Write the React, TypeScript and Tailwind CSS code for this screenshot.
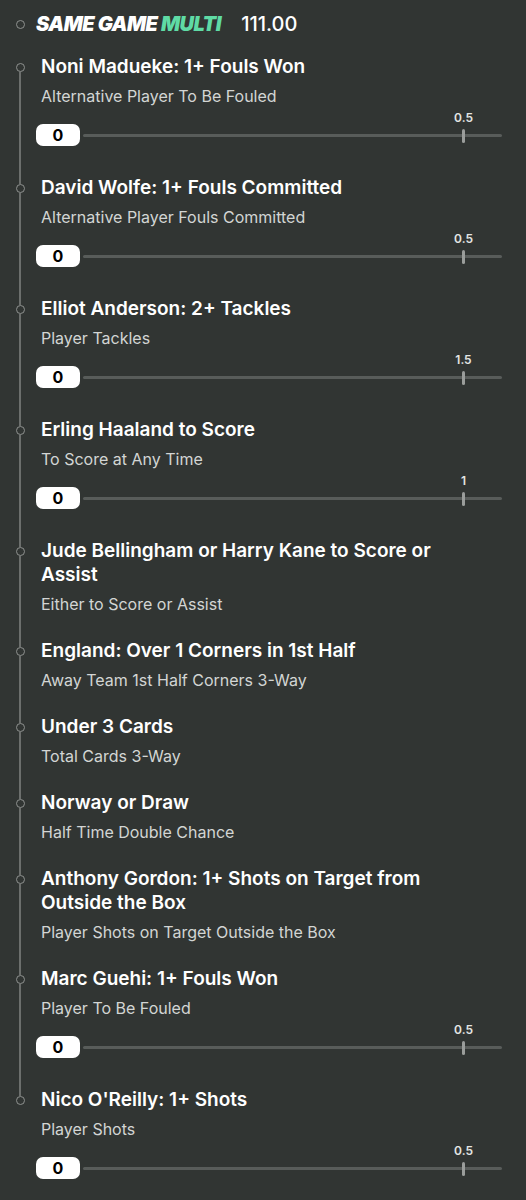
import React from 'react';

interface Leg {
  title: string;
  market: string;
  line?: string;
}

const legs: Leg[] = [
  { title: 'Noni Madueke: 1+ Fouls Won', market: 'Alternative Player To Be Fouled', line: '0.5' },
  { title: 'David Wolfe: 1+ Fouls Committed', market: 'Alternative Player Fouls Committed', line: '0.5' },
  { title: 'Elliot Anderson: 2+ Tackles', market: 'Player Tackles', line: '1.5' },
  { title: 'Erling Haaland to Score', market: 'To Score at Any Time', line: '1' },
  { title: 'Jude Bellingham or Harry Kane to Score or Assist', market: 'Either to Score or Assist' },
  { title: 'England: Over 1 Corners in 1st Half', market: 'Away Team 1st Half Corners 3-Way' },
  { title: 'Under 3 Cards', market: 'Total Cards 3-Way' },
  { title: 'Norway or Draw', market: 'Half Time Double Chance' },
  { title: 'Anthony Gordon: 1+ Shots on Target from Outside the Box', market: 'Player Shots on Target Outside the Box' },
  { title: 'Marc Guehi: 1+ Fouls Won', market: 'Player To Be Fouled', line: '0.5' },
  { title: "Nico O'Reilly: 1+ Shots", market: 'Player Shots', line: '0.5' },
];

function Dot() {
  return <div className="w-[9px] h-[9px] shrink-0 rounded-full border-[1.5px] border-[#8e918f]" />;
}

function ProgressBar({ line }: { line: string }) {
  return (
    <div className="mt-[18px] -ml-[5px] flex items-center h-[22px]">
      <div className="w-[44px] h-[22px] rounded-[7px] bg-white text-black text-[16px] font-bold leading-none flex items-center justify-center">
        0
      </div>
      <div className="relative flex-1 ml-[3px] h-[3px] rounded-full bg-[#585c5a]">
        <div className="absolute right-[37px] -top-[5px] w-[3px] h-[14px] rounded-sm bg-[#9a9d9b]">
          <span className="absolute left-1/2 -translate-x-1/2 bottom-[19px] text-[12px] leading-3 font-semibold text-[#e4e5e4]">
            {line}
          </span>
        </div>
      </div>
    </div>
  );
}

function LegRow({ leg, first, last }: { leg: Leg; first: boolean; last: boolean }) {
  return (
    <div className="flex">
      <div className="w-10 shrink-0 flex flex-col items-center">
        <div className={`w-[2px] h-[8px] ${first ? '' : 'bg-[#6c6f6d]'}`} />
        <Dot />
        <div className={`w-[2px] flex-1 ${last ? '' : 'bg-[#6c6f6d]'}`} />
      </div>
      <div className={`flex-1 pl-px pr-6 ${leg.line ? 'pb-[30px]' : 'pb-[25px]'}`}>
        <div className="max-w-[410px] text-[19px] leading-6 font-semibold text-white">{leg.title}</div>
        <div className="mt-[7px] text-[16px] leading-5 text-[#d3d5d4]">{leg.market}</div>
        {leg.line && <ProgressBar line={leg.line} />}
      </div>
    </div>
  );
}

export default function App() {
  return (
    <div className="min-h-screen bg-[#313533] pt-[10px] font-['Inter',_'Noto_Sans',_sans-serif] text-white">
      <div className="flex items-center h-7">
        <div className="w-10 shrink-0 flex justify-center">
          <Dot />
        </div>
        <div className="-ml-1 text-[20px] font-black italic tracking-tight">
          SAME GAME <span className="text-[#5fdba5]">MULTI</span>
        </div>
        <div className="ml-[20px] text-[20px] font-medium">111.00</div>
      </div>
      <div className="mt-[17px]">
        {legs.map((leg, i) => (
          <LegRow key={leg.title} leg={leg} first={i === 0} last={i === legs.length - 1} />
        ))}
      </div>
    </div>
  );
}
